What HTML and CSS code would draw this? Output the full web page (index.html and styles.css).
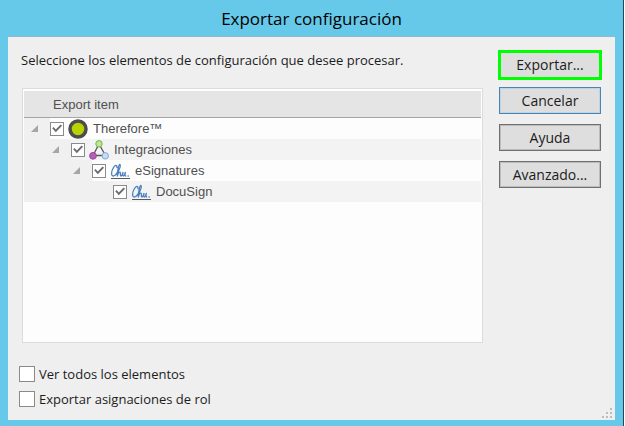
FILE: index.html
```html
<!DOCTYPE html>
<html lang="es">
<head>
<meta charset="utf-8">
<title>Exportar configuración</title>
<link rel="stylesheet" href="styles.css">
</head>
<body>
<svg class="defs" aria-hidden="true">
  <symbol id="sign" viewBox="0 0 20 20">
    <path d="M7 6.500C7 3.500 5 4 3.500 6.500 1 10.500 1 15 3.200 15 5 15 6.500 13 7.800 10.500M8 11C9.500 8 10.800 4 10 3.500 9 3.200 7.300 9 7.300 15c.7-2.500 1.800-4 2.700-3.800 1 .3-.2 3.800.9 3.800s1.600-2 2.100-3.500c-.4 2-.4 3.500.5 3.500s1.400-2 1.800-3.500c-.4 2-.3 3.500.4 3.500M18 15h.3" fill="none" stroke="#4a7fc0" stroke-width="1.300" stroke-linecap="round" stroke-linejoin="round"/>
    <path d="M1 17.500h19" stroke="#5a5a5a"/>
  </symbol>
</svg>
<div class="window">
  <h1 class="title">Exportar configuración</h1>
  <main class="panel">
    <section class="content">
      <p class="intro">Seleccione los elementos de configuración que desee procesar.</p>
      <div class="tree">
        <div class="tree-head">Export item</div>
        <div class="row">
          <span class="indent level-1"><i class="arrow"></i></span>
          <label class="item"><input class="tick" type="checkbox" checked>
            <svg class="icon" viewBox="0 0 20 20"><circle cx="10" cy="10" r="8" fill="#b9d300" stroke="#4d4d4d" stroke-width="3.500"/></svg>
            <span>Therefore™</span></label>
        </div>
        <div class="row shaded">
          <span class="indent level-2"><i class="arrow"></i></span>
          <label class="item"><input class="tick" type="checkbox" checked>
            <svg class="icon" viewBox="0 0 20 20"><path d="M10 4 4 15.500h12.500z" fill="none" stroke="#555" stroke-width="1.300"/><circle cx="10" cy="3.800" r="3.200" fill="#cde38a" stroke="#62b562"/><circle cx="4" cy="15.800" r="3.400" fill="#b85cb8" stroke="#984a9c"/><circle cx="16.300" cy="15.800" r="3.200" fill="#c4dcf4" stroke="#82a9d2"/></svg>
            <span>Integraciones</span></label>
        </div>
        <div class="row">
          <span class="indent level-3"><i class="arrow"></i></span>
          <label class="item"><input class="tick" type="checkbox" checked>
            <svg class="icon"><use href="#sign"/></svg>
            <span>eSignatures</span></label>
        </div>
        <div class="row shaded">
          <span class="indent level-4"></span>
          <label class="item"><input class="tick" type="checkbox" checked>
            <svg class="icon"><use href="#sign"/></svg>
            <span>DocuSign</span></label>
        </div>
      </div>
      <div class="options">
        <label class="option"><input class="box" type="checkbox">Ver todos los elementos</label>
        <label class="option"><input class="box" type="checkbox">Exportar asignaciones de rol</label>
      </div>
    </section>
    <div class="actions">
      <button class="button marked" type="button">Exportar...</button>
      <button class="button focused" type="button">Cancelar</button>
      <button class="button" type="button">Ayuda</button>
      <button class="button" type="button">Avanzado...</button>
    </div>
    <svg class="grip" viewBox="0 0 10 10" aria-hidden="true"><path d="M8 0h2v2H8zM4 4h2v2H4zM8 4h2v2H8zM0 8h2v2H0zM4 8h2v2H4zM8 8h2v2H8z" fill="#bdbdbd"/></svg>
  </main>
</div>
</body>
</html>
```
FILE: styles.css
```css
* { box-sizing: border-box; }

body {
  margin: 0;
  background: #fff;
  font: 13px/20px "Open Sans", sans-serif;
  color: #1c1c1c;
}

.defs { position: absolute; width: 0; height: 0; }

.window {
  display: flex;
  flex-direction: column;
  min-height: 100vh;
  margin-right: 1px;
  padding: 0 8px 6px;
  border-right: 1px solid #24485a;
  background: #66c9ea;
}

.title {
  margin: 0;
  padding-top: 2px;
  font: 17px/34px "Open Sans", sans-serif;
  text-align: center;
  color: #000;
}

.panel {
  position: relative;
  flex: 1;
  display: flex;
  gap: 15px;
  padding: 13px 13px 8px 11px;
  border-top: 1px solid #8fb9cb;
  background: #efefef;
}

.content { flex: 1; }

.intro { margin: 0 0 18px 2px; }

.tree {
  height: 255px;
  margin-left: 3px;
  padding: 2px 1px;
  border: 1px solid #dcdcdc;
  background: #fdfdfd;
  font-family: "Liberation Sans", sans-serif;
  color: #505050;
}

.tree-head {
  height: 27px;
  padding: 2px 29px;
  line-height: 24px;
  border-bottom: 1px solid #a5a5a5;
  background: #e5e5e5;
}

.row { display: flex; height: 21px; }
.shaded { background: #f3f3f3; }

.indent {
  display: flex;
  align-items: center;
  justify-content: flex-end;
  padding-right: 12px;
  background: #f0f0f0;
}
.level-1 { width: 26px; }
.level-2 { width: 47px; }
.level-3 { width: 68px; }
.level-4 { width: 89px; }

.arrow {
  width: 7px;
  height: 7px;
  background: #a6a6a6;
  clip-path: polygon(100% 0, 100% 100%, 0 100%);
}

.item { display: flex; align-items: center; }

.tick, .box {
  appearance: none;
  flex: none;
  margin: 0;
  border: 1px solid #8a8a8a;
  background: #fff;
}

.tick { width: 14px; height: 14px; }
.tick:checked::before {
  content: "";
  display: block;
  width: 12px;
  height: 12px;
  background: #6c6c6c;
  clip-path: polygon(10% 48%, 22% 38%, 40% 58%, 80% 16%, 92% 28%, 40% 82%);
}

.icon { width: 20px; height: 20px; margin: 0 5px 0 4px; }

.options {
  display: flex;
  flex-direction: column;
  gap: 5px;
  margin-top: 21px;
}

.option { display: flex; align-items: center; gap: 4px; }
.box { width: 16px; height: 16px; }

.actions {
  display: flex;
  flex-direction: column;
  gap: 10px;
  width: 104px;
}

.button {
  height: 27px;
  margin: 0 1px;
  padding: 0;
  border: 1px solid #707070;
  outline: 1px solid #bcbcbc;
  outline-offset: -2px;
  background: #dedede;
  font: 14px/20px "Open Sans", sans-serif;
  color: #1c1c1c;
}
.marked { height: 30px; margin: 0 0 -3px; border: 3px solid #0f0; outline: none; }
.focused { border-color: #4785b5; outline-color: #bed4e4; }

.grip {
  position: absolute;
  right: 3px;
  bottom: 2px;
  width: 10px;
  height: 10px;
}
```
